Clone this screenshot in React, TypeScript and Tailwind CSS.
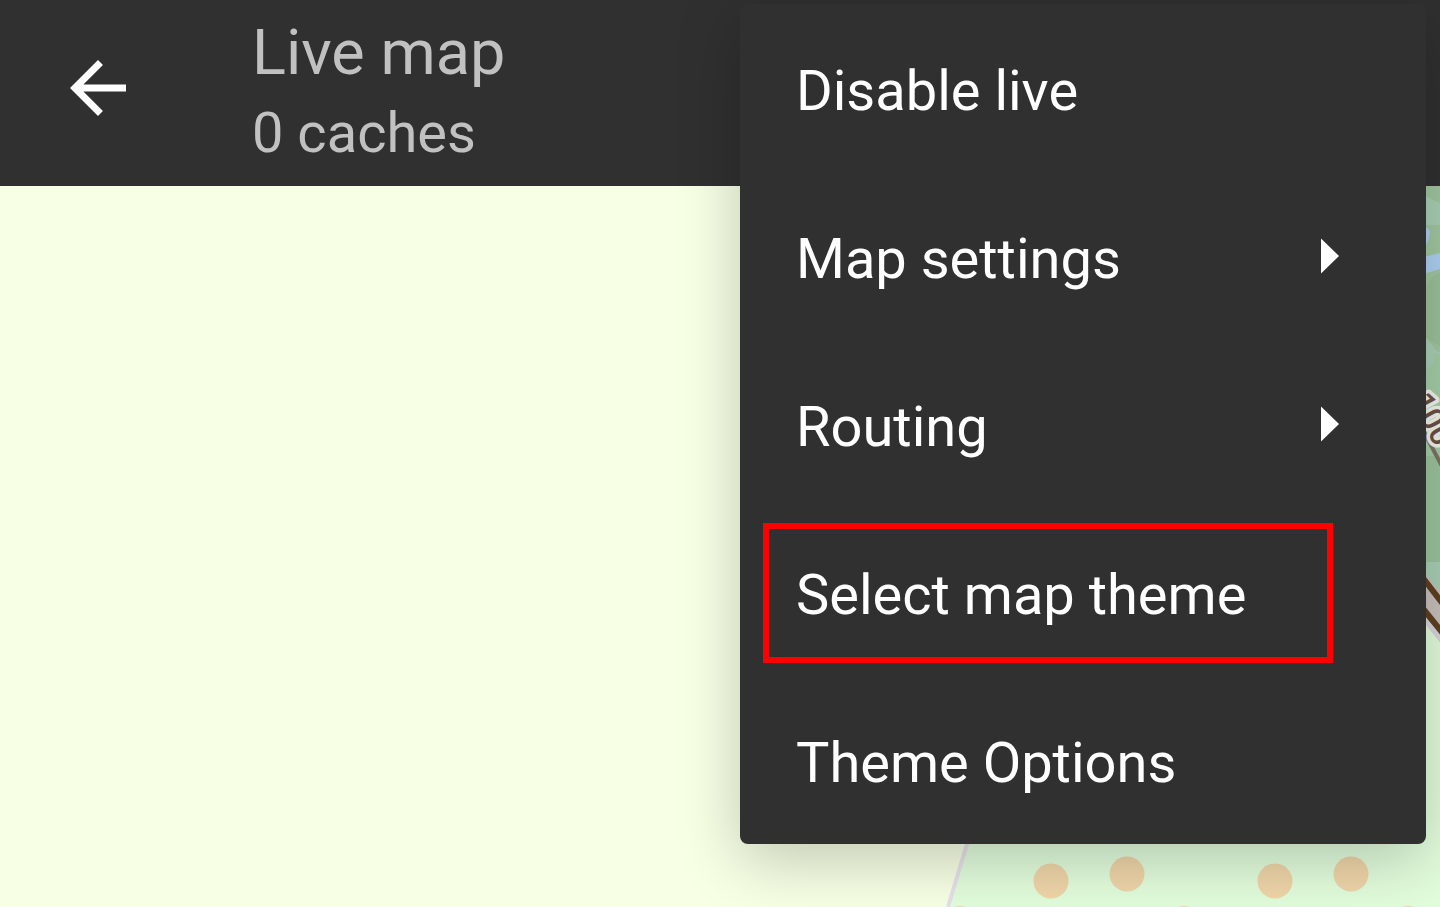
import React from "react";

type MenuEntry = {
  label: string;
  submenu?: boolean;
  highlighted?: boolean;
};

const entries: MenuEntry[] = [
  { label: "Disable live" },
  { label: "Map settings", submenu: true },
  { label: "Routing", submenu: true },
  { label: "Select map theme", highlighted: true },
  { label: "Theme Options" },
];

function MapCanvas() {
  return (
    <svg
      className="absolute top-0 right-0 h-[721px] w-[500px]"
      viewBox="940 186 500 721"
      aria-hidden="true"
    >
      <path d="M967 844 L1000 730 V186 H1440 V907 H948 Z" fill="#e2fddc" />
      <path d="M1006 710 L967 844 L948 907" fill="none" stroke="#e4e2e8" strokeWidth="4" />
      <path d="M1400 186 H1440 V632 L1400 590 Z" fill="#a8d0b5" />
      <path d="M1400 186 H1440 V203 Q1432 200 1426 196 Z" fill="#a0c79f" />
      <path d="M1400 225 H1440 V352 Q1436 352 1434 347 L1426 338 H1400 Z" fill="#a0c8a0" />
      <path d="M1426 287 Q1430 277 1440 272 V346 L1426 338 Z" fill="#9bc299" />
      <path d="M1426 370 L1434 362 V354 H1440 V456 H1426 Z" fill="#a4cea8" />
      <path d="M1400 456 H1440 V562 H1400 Z" fill="#9bc49c" />
      <path d="M1424 226 Q1432 229 1429 238 L1424 250 Z" fill="#aed1f4" />
      <path d="M1400 263 L1440 253 V269 L1400 281 Z" fill="#aed1f4" />
      <path d="M1424 432 L1446 474" stroke="#7f7261" strokeWidth="4" />
      <path d="M1416 608 L1450 650" stroke="#d8d5dc" strokeWidth="6" />
      <path d="M1416 581 L1450 622" stroke="#c8c0bb" strokeWidth="24" />
      <path d="M1416 569 L1450 613" stroke="#5e4021" strokeWidth="6" />
      <path d="M1416 600 L1450 642" stroke="#5e4021" strokeWidth="6" />
      <text
        transform="translate(1410 400) rotate(62)"
        fontFamily="Roboto, sans-serif"
        fontSize="32"
        fontWeight="500"
        fill="#6a5146"
        stroke="#f1f3ec"
        strokeWidth="7"
        strokeLinejoin="round"
        paintOrder="stroke"
      >
        100
      </text>
      <g fill="#efd5a9">
        <circle cx="1051" cy="881" r="17.5" />
        <circle cx="1127" cy="874" r="17.5" />
        <circle cx="1275" cy="881" r="17.5" />
        <circle cx="1351" cy="874" r="17.5" />
        <circle cx="960" cy="923.5" r="17.5" />
        <circle cx="1184" cy="923.5" r="17.5" />
        <circle cx="1408" cy="923.5" r="17.5" />
      </g>
    </svg>
  );
}

function MenuItem({ label, submenu, highlighted }: MenuEntry) {
  return (
    <li className="relative">
      <button
        type="button"
        role="menuitem"
        aria-haspopup={submenu ? "menu" : undefined}
        className="flex h-[168px] w-full items-center justify-between pr-[87px] pl-14 text-left text-[56px] leading-[66px] text-white"
      >
        <span className="pt-1.5">{label}</span>
        {submenu && (
          <svg className="h-[36px] w-[18px]" viewBox="0 0 18 36" fill="white" aria-hidden="true">
            <path d="M0 0.5 L18 18 L0 35.5 Z" />
          </svg>
        )}
      </button>
      {highlighted && (
        <span className="pointer-events-none absolute top-[15px] right-[93px] bottom-[13px] left-[23px] border-6 border-[#ff0000]" />
      )}
    </li>
  );
}

export default function App() {
  return (
    <div className="relative flex min-h-screen flex-col overflow-hidden bg-[#f7ffe5] font-[Roboto,sans-serif]">
      <header className="flex h-[186px] items-center bg-[#303030]">
        <button type="button" aria-label="Back" className="ml-[70px] pb-[10px]">
          <svg className="size-14" viewBox="4 4 16 16" fill="white" aria-hidden="true">
            <path d="M20 11H7.83l5.59-5.59L12 4l-8 8 8 8 1.41-1.41L7.83 13H20v-2z" />
          </svg>
        </button>
        <div className="ml-[126px] pb-1 text-[#c1c1c1]">
          <h1 className="text-[63px] leading-[84px]">Live map</h1>
          <p className="text-[56px] leading-[76px]">0 caches</p>
        </div>
      </header>
      <main className="relative min-h-[721px] flex-1">
        <MapCanvas />
      </main>
      <ul
        role="menu"
        className="absolute top-1 right-[14px] w-[686px] rounded-lg bg-[#303030] shadow-[0_16px_64px_rgba(0,0,0,0.22)]"
      >
        {entries.map((entry) => (
          <MenuItem key={entry.label} {...entry} />
        ))}
      </ul>
    </div>
  );
}
